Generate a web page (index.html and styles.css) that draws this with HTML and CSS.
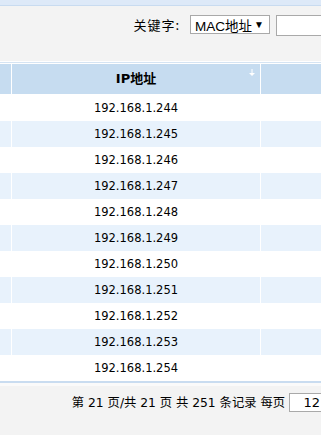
FILE: index.html
```html
<!DOCTYPE html>
<html>
<head>
<meta charset="utf-8">
<link rel="stylesheet" href="styles.css">
</head>
<body>
<div class="topbar"></div>
<div class="toolbar">
  <span class="label">关键字:</span>
  <div class="select"><span>MAC地址</span><span class="caret">▼</span></div>
  <div class="input"></div>
</div>
<div class="grid">
  <div class="row head">
    <div class="cell"></div>
    <div class="cell ip">IP地址
      <svg class="sort" width="6" height="8" viewBox="0 0 6 8"><path d="M3 0v7M0.5 4.5h5M1.5 5.5h3" stroke="#fff" stroke-width="1" fill="none"/></svg>
    </div>
    <div class="cell"></div>
  </div>
  <div class="row"><div class="cell"></div><div class="cell">192.168.1.244</div><div class="cell"></div></div>
  <div class="row alt"><div class="cell"></div><div class="cell">192.168.1.245</div><div class="cell"></div></div>
  <div class="row"><div class="cell"></div><div class="cell">192.168.1.246</div><div class="cell"></div></div>
  <div class="row alt"><div class="cell"></div><div class="cell">192.168.1.247</div><div class="cell"></div></div>
  <div class="row"><div class="cell"></div><div class="cell">192.168.1.248</div><div class="cell"></div></div>
  <div class="row alt"><div class="cell"></div><div class="cell">192.168.1.249</div><div class="cell"></div></div>
  <div class="row"><div class="cell"></div><div class="cell">192.168.1.250</div><div class="cell"></div></div>
  <div class="row alt"><div class="cell"></div><div class="cell">192.168.1.251</div><div class="cell"></div></div>
  <div class="row"><div class="cell"></div><div class="cell">192.168.1.252</div><div class="cell"></div></div>
  <div class="row alt"><div class="cell"></div><div class="cell">192.168.1.253</div><div class="cell"></div></div>
  <div class="row"><div class="cell"></div><div class="cell">192.168.1.254</div><div class="cell"></div></div>
</div>
<div class="footer">
  <span class="pager">第 21 页/共 21 页 共 251 条记录 每页</span>
  <div class="pinput">12</div>
</div>
</body>
</html>
```
FILE: styles.css
```css
html, body {
  margin: 0;
  padding: 0;
  background: #f3f3f3;
  font-family: "DejaVu Sans", "Noto Sans CJK SC", sans-serif;
  font-size: 12px;
  color: #000;
  overflow: hidden;
  width: 321px;
  height: 435px;
}
.topbar {
  height: 5px;
  background: #dde9f8;
  border-bottom: 1px solid #c8dbf0;
}
.toolbar {
  height: 55px;
  display: flex;
  align-items: flex-start;
  justify-content: flex-end;
  padding-top: 9px;
  box-sizing: border-box;
  white-space: nowrap;
}
.label {
  font-family: "Noto Sans CJK SC", sans-serif;
  font-size: 13px;
  line-height: 20px;
  margin-right: 10px;
  letter-spacing: 1px;
}
.select {
  width: 80px;
  height: 19px;
  box-sizing: border-box;
  border: 1px solid #a9a9a9;
  background: #fff;
  display: flex;
  align-items: center;
  justify-content: space-between;
  padding: 0 5px 0 4px;
  font-family: "Liberation Sans", "Noto Sans CJK SC", sans-serif;
  font-size: 13.5px;
  flex-shrink: 0;
}
.caret { font-size: 10px; }
.input {
  margin-left: 6px;
  width: 45px;
  height: 21px;
  box-sizing: border-box;
  border: 1px solid #a9a9a9;
  border-right: none;
  background: #fff;
  flex-shrink: 0;
}
.grid {
  border-top: 1px solid #fff;
  border-bottom: 2px solid #c9dcf0;
}
.row {
  display: grid;
  grid-template-columns: 11px 248px 1fr;
  column-gap: 1px;
  background: #fff;
  height: 26px;
}
.row .cell {
  background: #fff;
  text-align: center;
  line-height: 26px;
  font-size: 11.5px;
}
.row.alt .cell { background: #e8f2fc; }
.row.head {
  height: 33px;
  border-top: 1px solid #d5e4f3;
  box-sizing: border-box;
  padding: 1px 0 1px;
}
.row.head .cell {
  background: #c6dcf0;
  height: 30px;
  line-height: 30px;
  font-weight: bold;
  font-size: 13px;
  position: relative;
}
.sort {
  position: absolute;
  right: 5px;
  top: 5px;
}
.footer {
  height: 51px;
  border-top: 3px solid #fafafa;
  display: flex;
  justify-content: flex-end;
  align-items: flex-start;
  padding-top: 7px;
  box-sizing: border-box;
  white-space: nowrap;
}
.pager {
  font-family: "DejaVu Sans", "Noto Sans CJK SC", sans-serif;
  font-size: 12.3px;
  line-height: 20px;
  margin-right: 4px;
}
.pinput {
  width: 32px;
  height: 19px;
  box-sizing: border-box;
  border: 1px solid #a9a9a9;
  border-right: none;
  background: #fff;
  text-align: right;
  font-size: 13px;
  line-height: 17px;
  flex-shrink: 0;
  padding-right: 1px;
}
```
